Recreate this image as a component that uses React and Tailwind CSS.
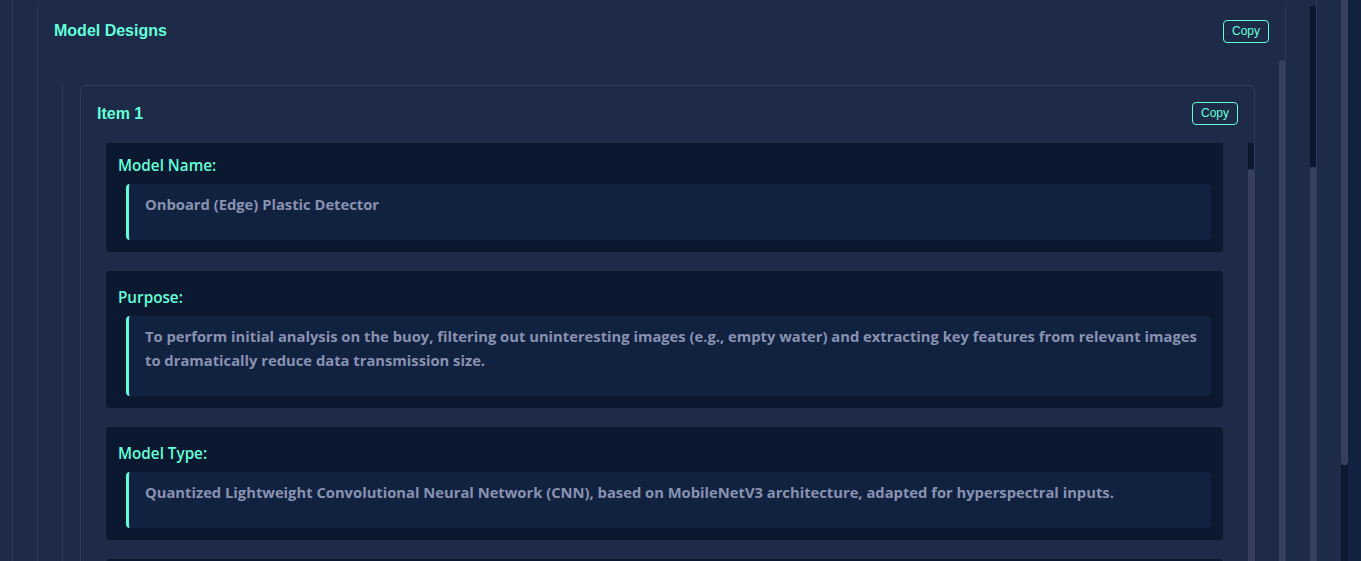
const TEXT_FONT = { fontFamily: "'Open Sans', 'Noto Sans', sans-serif" };
const HEAD_FONT = { fontFamily: "'Liberation Sans', Arial, sans-serif" };

function CopyButton() {
  return (
    <button
      className="h-[23px] w-[46px] rounded-[4px] border border-[#64ffda] bg-transparent text-[12px] leading-[15px] text-[#64ffda]"
      style={HEAD_FONT}
    >
      Copy
    </button>
  );
}

function Field({ label, children, first }) {
  return (
    <div className={`shrink-0 rounded-[4px] bg-[#0a192f] px-3 pb-3 pt-[15px] ${first ? "-mt-[4px]" : ""}`}>
      <div
        className="mb-2 text-[15.25px] font-semibold leading-[22px] text-[#64ffda]"
        style={TEXT_FONT}
      >
        {label}
      </div>
      <div className="ml-2 rounded-[4px] border-l-[3px] border-[#64ffda] bg-[#112240] pb-[24px] pl-4 pr-2 pt-[8px]">
        <p className="text-[14.75px] font-bold leading-[24px] text-[#8892b0]" style={TEXT_FONT}>
          {children}
        </p>
      </div>
    </div>
  );
}

export default function App() {
  return (
    <div className="flex h-[561px] w-full overflow-hidden bg-[#112240]">
      {/* page content area */}
      <div className="flex h-full w-[1341px] bg-[#1d2a48] pl-3">
        {/* panel A */}
        <div className="flex h-full w-[1305px] flex-col border-x border-[#2f3b5a]">
          <div className="h-[6px]" />
          <div className="flex min-h-0 flex-1">
            <div className="flex min-w-0 flex-1 pl-6 pr-6">
              {/* section B */}
              <div className="flex h-full w-[1249px] border-x border-[#2f3b5a]">
                <div className="flex min-w-0 flex-1 flex-col pl-4 pr-[9px]">
                  <div className="mr-px flex h-[48px] shrink-0 items-center justify-between pt-[2px]">
                    <h2 className="text-[16px] font-bold text-[#64ffda]" style={HEAD_FONT}>
                      Model Designs
                    </h2>
                    <CopyButton />
                  </div>
                  <div className="ml-2 mt-[31px] flex min-h-0 flex-1 border-l border-[#2f3b5a] pl-[17px] pr-[15px]">
                    {/* Item card */}
                    <div className="flex min-w-0 flex-1 flex-col rounded-t-md border-x border-t border-[#2f3b5a]">
                      <div className="flex h-[57px] shrink-0 items-center justify-between pb-[2px] pl-4 pr-4">
                        <h3 className="text-[16px] font-bold text-[#64ffda]" style={HEAD_FONT}>
                          Item 1
                        </h3>
                        <CopyButton />
                      </div>
                      <div className="flex min-h-0 flex-1">
                        <div className="flex min-w-0 flex-1 flex-col gap-[19px] overflow-hidden px-[25px]">
                          <Field label="Model Name:" first>
                            Onboard (Edge) Plastic Detector
                          </Field>
                          <Field label="Purpose:">
                            To perform initial analysis on the buoy, filtering out uninteresting images (e.g., empty
                            water) and extracting key features from relevant images to dramatically reduce data
                            transmission size.
                          </Field>
                          <Field label="Model Type:">
                            Quantized Lightweight Convolutional Neural Network (CNN), based on MobileNetV3
                            architecture, adapted for hyperspectral inputs.
                          </Field>
                          <div className="h-[113px] shrink-0 rounded-[4px] bg-[#0a192f]" />
                        </div>
                        {/* card scrollbar */}
                        <div className="flex w-[6px] shrink-0 flex-col">
                          <div className="h-[26px] bg-[#0a192f]" />
                          <div className="flex-1 rounded-t-[3px] bg-[#363f5f]" />
                        </div>
                      </div>
                    </div>
                  </div>
                </div>
                {/* section B scrollbar */}
                <div className="flex w-[6px] shrink-0 flex-col">
                  <div className="h-[54px]" />
                  <div className="flex-1 rounded-t-[3px] bg-[#363f5f]" />
                </div>
              </div>
            </div>
            {/* panel A scrollbar */}
            <div className="flex w-[6px] shrink-0 flex-col">
              <div className="h-[161px] bg-[#0a192f]" />
              <div className="flex-1 rounded-t-[3px] bg-[#363f5f]" />
            </div>
          </div>
        </div>
      </div>
      {/* page scrollbar */}
      <div className="flex h-full w-[7px] shrink-0 flex-col bg-[#0a192f]">
        <div className="h-[465px] rounded-b-[3px] bg-[#363f5f]" />
      </div>
      <div className="flex-1" />
    </div>
  );
}
